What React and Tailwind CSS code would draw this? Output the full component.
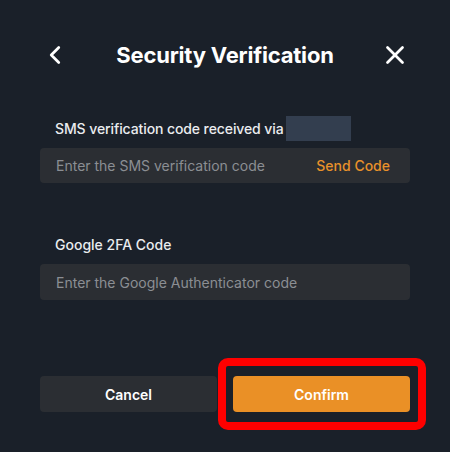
import { ChevronLeft, X } from "lucide-react";

const FONT = { fontFamily: "Inter, 'Noto Sans', sans-serif" };

const App = () => {
  return (
    <div className="w-[450px] h-[452px] bg-[#1a2029] text-[#eaecef] flex flex-col px-[40px] pt-[40px]" style={FONT}>

      {/* ── Header ───────────────────────────────────────── */}
      <div className="h-[30px] flex items-center justify-between">
        <button className="w-[30px] h-[30px] flex items-center justify-center text-white">
          <ChevronLeft size={30} strokeWidth={2.2} />
        </button>
        <div className="text-[22px] font-bold text-white tracking-[-0.2px]">Security Verification</div>
        <button className="w-[30px] h-[30px] flex items-center justify-center text-white">
          <X size={30} strokeWidth={2.2} />
        </button>
      </div>

      {/* ── SMS code ─────────────────────────────────────── */}
      <div className="mt-[48px] flex flex-col">
        <div className="h-[20px] px-[15px] flex items-center gap-[2px] text-[14px] font-medium">
          <span className="tracking-[-0.1px]">SMS verification code received via</span>
          <span className="w-[65px] h-[25px] bg-[#333e4f]" />
        </div>
        <div className="mt-[10px] h-[35px] rounded-[4px] bg-[#2b2e33] flex items-center justify-between px-[16px] pr-[20px] text-[14px]">
          <span className="text-[#8b8e93]">Enter the SMS verification code</span>
          <span className="text-[#e8912a] font-medium">Send Code</span>
        </div>
      </div>

      {/* ── Google 2FA ───────────────────────────────────── */}
      <div className="mt-[51px] flex flex-col">
        <div className="h-[20px] px-[15px] flex items-center text-[14px] font-medium">Google 2FA Code</div>
        <div className="mt-[10px] h-[36px] rounded-[4px] bg-[#2b2e33] flex items-center px-[16px] text-[14px]">
          <span className="text-[#8b8e93]">Enter the Google Authenticator code</span>
        </div>
      </div>

      {/* ── Actions ──────────────────────────────────────── */}
      <div className="mt-[76px] flex gap-[16px]">
        <button className="flex-1 h-[36px] rounded-[4px] bg-[#2b2e33] text-white text-[14px] font-semibold">
          Cancel
        </button>
        <div className="relative flex-1">
          <button className="w-full h-[36px] rounded-[4px] bg-[#ea9026] text-white text-[14px] font-semibold">
            Confirm
          </button>
          <span className="absolute left-[-15px] right-[-16px] top-[-18px] bottom-[-18px] border-[8px] border-[#ff0000] rounded-[10px] pointer-events-none" />
        </div>
      </div>

    </div>
  );
};

export default App;
